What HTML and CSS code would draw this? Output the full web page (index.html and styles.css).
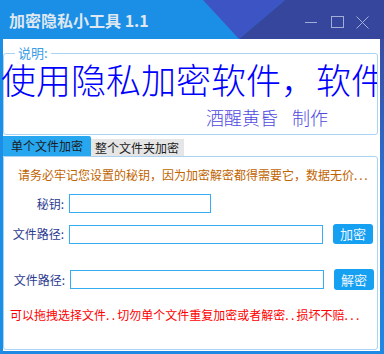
FILE: index.html
```html
<!DOCTYPE html>
<html lang="zh-CN">
<head>
<meta charset="utf-8">
<title>加密隐私小工具 1.1</title>
<link rel="stylesheet" href="styles.css">
</head>
<body>
<div class="window">
  <div class="titlebar">
    <svg class="tb-bg" width="384" height="39" viewBox="0 0 384 39">
      <rect x="0" y="0" width="384" height="39" fill="#1b8fe6"/>
      <polygon points="203,0 285,0 239,39" fill="#3d55c4"/>
      <polygon points="285,0 384,0 384,39 239,39" fill="#35469c"/>
    </svg>
    <span class="title">加密隐私小工具 1.1</span>
    <div class="controls">
      <svg width="13" height="13" viewBox="0 0 13 13"><line x1="0" y1="6.5" x2="12" y2="6.5" stroke="#a3aed6" stroke-width="1"/></svg>
      <svg width="13" height="13" viewBox="0 0 13 13"><rect x="0.5" y="0.5" width="12" height="11" fill="none" stroke="#a3aed6" stroke-width="1"/></svg>
      <svg width="13" height="13" viewBox="0 0 13 13"><path d="M0.5 0.5 L12.5 12.5 M12.5 0.5 L0.5 12.5" stroke="#a3aed6" stroke-width="1" fill="none"/></svg>
    </div>
  </div>
  <div class="frame">
    <div class="client">
      <fieldset class="info">
        <legend>说明:</legend>
        <div class="big">使用隐私加密软件，软件</div>
        <div class="author">酒醒黄昏<span class="made">制作</span></div>
      </fieldset>
      <div class="tabs">
        <div class="tab active">单个文件加密</div>
        <div class="tab">整个文件夹加密</div>
      </div>
      <div class="panel">
        <div class="warn">请务必牢记您设置的秘钥，因为加密解密都得需要它，数据无价<span class="dots3">...</span></div>
        <div class="row row1">
          <span class="label">秘钥:</span>
          <span class="input key"></span>
        </div>
        <div class="row row2">
          <span class="label">文件路径:</span>
          <span class="input path"></span>
          <span class="btn">加密</span>
        </div>
        <div class="row row3">
          <span class="label">文件路径:</span>
          <span class="input path"></span>
          <span class="btn tall">解密</span>
        </div>
        <div class="hint">可以拖拽选择文件<span class="dots2">..</span>切勿单个文件重复加密或者解密<span class="dots2">..</span>损坏不赔<span class="dots2">...</span></div>
      </div>
    </div>
    <div class="rstrip"></div>
  </div>
</div>
</body>
</html>
```

FILE: styles.css
```css
html, body {
  margin: 0;
  padding: 0;
  background: #ffffff;
}
body {
  font-family: "Noto Sans CJK SC", "Noto Sans", sans-serif;
}
.window {
  width: 384px;
  height: 354px;
  display: flex;
  flex-direction: column;
  overflow: hidden;
}
.titlebar {
  position: relative;
  height: 39px;
  flex: none;
  display: flex;
  align-items: center;
}
.tb-bg {
  position: absolute;
  left: 0;
  top: 0;
}
.title {
  position: relative;
  margin-left: 9px;
  font-size: 16px;
  font-weight: bold;
  color: #dfe7f1;
  line-height: 20px;
  white-space: nowrap;
}
.controls {
  position: relative;
  margin-left: auto;
  margin-right: 15px;
  align-self: flex-start;
  margin-top: 16px;
  display: flex;
  gap: 12px;
}
.controls svg {
  display: block;
}
.controls svg:first-child {
  margin-right: 1px;
}
.frame {
  flex: 1;
  display: flex;
  min-height: 0;
}
.client {
  flex: 1;
  min-width: 0;
  background: #ffffff;
  border-left: 3px solid #1b8fe6;
  border-bottom: 3px solid #1e88e5;
  display: flex;
  flex-direction: column;
  padding-right: 2px;
}
.rstrip {
  width: 4px;
  flex: none;
  background: linear-gradient(to bottom, #3a4ca4 0%, #2a70d2 45%, #1e88e5 100%);
}
.info {
  margin: 7px 0 0 0;
  padding: 0 0 6px 0;
  border: 1px solid #a9d2f3;
  border-radius: 3px;
  min-width: 0;
}
.info legend {
  margin-left: 11px;
  padding: 0 3px;
  font-size: 13px;
  line-height: 14px;
  color: #3a9de6;
}
.big {
  margin-left: -3px;
  font-size: 35px;
  font-weight: 300;
  line-height: 38px;
  color: #0000ff;
  white-space: nowrap;
  overflow: hidden;
}
.author {
  margin-top: 8px;
  margin-left: 202px;
  font-size: 18px;
  font-weight: 300;
  line-height: 22px;
  color: #4f4ae0;
  white-space: nowrap;
}
.made {
  margin-left: 14px;
}
.tabs {
  margin-top: 1px;
  height: 20px;
  display: flex;
  align-items: flex-end;
  flex: none;
}
.tab {
  font-size: 12px;
  color: #1c1c1c;
  background: #e6e6e6;
  height: 17px;
  line-height: 17px;
  padding: 0 5px 0 4px;
  white-space: nowrap;
}
.tab.active {
  background: #27a7f0;
  height: 20px;
  line-height: 20px;
  padding: 0 8px;
  border-top-right-radius: 2px;
}
.panel {
  flex: 1;
  border: 1px solid #a9d2f3;
  border-radius: 0 3px 3px 3px;
  padding-top: 10px;
  margin-bottom: 1px;
}
.warn {
  margin-left: 14px;
  font-size: 12px;
  line-height: 16px;
  color: #c06400;
  white-space: nowrap;
}
.dots3 {
  letter-spacing: 1.8px;
}
.row {
  display: flex;
  align-items: center;
}
.row1 {
  margin-top: 11px;
  height: 19px;
}
.row2 {
  margin-top: 11px;
  height: 20px;
}
.row3 {
  margin-top: 25px;
  height: 21px;
  padding-left: 1px;
}
.label {
  width: 60px;
  text-align: right;
  font-size: 12px;
  line-height: 16px;
  color: #2c3b8f;
  white-space: nowrap;
}
.input {
  margin-left: 5px;
  height: 19px;
  box-sizing: border-box;
  border: 1px solid #36acf2;
  background: #ffffff;
}
.input.key {
  width: 142px;
}
.input.path {
  width: 254px;
}
.btn {
  margin-left: 10px;
  width: 40px;
  height: 20px;
  border-radius: 3px;
  background: #16a0f2;
  color: #eef7ff;
  font-size: 13px;
  line-height: 20px;
  text-align: center;
}
.btn.tall {
  height: 21px;
  line-height: 21px;
}
.hint {
  margin-top: 17px;
  margin-left: 6px;
  font-size: 12px;
  line-height: 16px;
  color: #ff0000;
  white-space: nowrap;
}
.dots2 {
  letter-spacing: 2.3px;
}
```
